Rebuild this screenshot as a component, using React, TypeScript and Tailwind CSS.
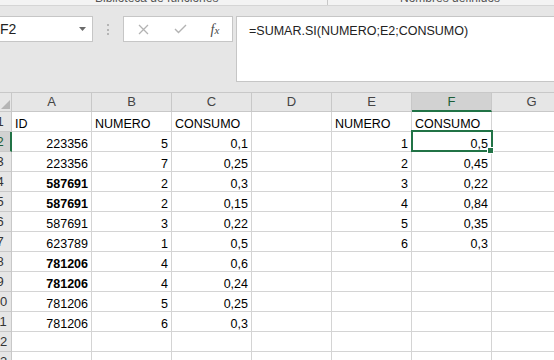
import React from "react";

type Cell = { v: string; align?: "l" | "r"; bold?: boolean };

const FONT = { fontFamily: '"Liberation Sans", Arial, sans-serif' };

const COLS = ["A", "B", "C", "D", "E", "F", "G"];

const L = (v: string): Cell => ({ v, align: "l" });
const R = (v: string, bold = false): Cell => ({ v, align: "r", bold });
const E: Cell = { v: "" };

const ROWS: Cell[][] = [
  [L("ID"), L("NUMERO"), L("CONSUMO"), E, L("NUMERO"), L("CONSUMO"), E],
  [R("223356"), R("5"), R("0,1"), E, R("1"), R("0,5"), E],
  [R("223356"), R("7"), R("0,25"), E, R("2"), R("0,45"), E],
  [R("587691", true), R("2"), R("0,3"), E, R("3"), R("0,22"), E],
  [R("587691", true), R("2"), R("0,15"), E, R("4"), R("0,84"), E],
  [R("587691"), R("3"), R("0,22"), E, R("5"), R("0,35"), E],
  [R("623789"), R("1"), R("0,5"), E, R("6"), R("0,3"), E],
  [R("781206", true), R("4"), R("0,6"), E, E, E, E],
  [R("781206", true), R("4"), R("0,24"), E, E, E, E],
  [R("781206"), R("5"), R("0,25"), E, E, E, E],
  [R("781206"), R("6"), R("0,3"), E, E, E, E],
  [E, E, E, E, E, E, E],
  [E, E, E, E, E, E, E],
];

function FormulaBar() {
  return (
    <div className="flex h-[86px] items-start bg-[#e6e6e6] pt-[10px]">
      <div className="relative flex h-[26px] w-[93px] items-center border border-l-0 border-[#c6c6c6] bg-white text-[14px] text-[#222]">
        <span>F2</span>
        <svg className="absolute left-[79px] top-[10px]" width="7" height="4" viewBox="0 0 7 4">
          <path d="M0 0 L7 0 L3.5 4 Z" fill="#6a6a6a" />
        </svg>
      </div>
      <div className="flex w-[30px] flex-col items-center gap-[2.5px] pt-[8px]">
        <span className="h-[2px] w-[2px] bg-[#b5b5b5]" />
        <span className="h-[2px] w-[2px] bg-[#b5b5b5]" />
        <span className="h-[2px] w-[2px] bg-[#b5b5b5]" />
      </div>
      <div className="flex h-[26px] w-[110px] items-center border border-[#c6c6c6] bg-white">
        <div className="flex w-[38px] justify-center pl-[1px]">
          <svg width="11" height="11" viewBox="0 0 11 11">
            <path d="M1 1 L10 10 M10 1 L1 10" stroke="#b3b3b3" strokeWidth="1.3" />
          </svg>
        </div>
        <div className="flex w-[36px] justify-center">
          <svg width="13" height="10" viewBox="0 0 13 10">
            <path d="M1 5 L4.5 8.5 L12 1" stroke="#b3b3b3" strokeWidth="1.4" fill="none" />
          </svg>
        </div>
        <div
          className="flex w-[34px] justify-center text-[14px] italic text-[#4a4a4a]"
          style={{ fontFamily: '"Liberation Serif", "Times New Roman", serif' }}
        >
          <span>f</span>
          <span className="mt-[3px] text-[11px]">x</span>
        </div>
      </div>
      <div className="ml-[3px] h-[66px] flex-1 border border-r-0 border-[#c6c6c6] bg-white pl-[12px] pt-[5px] text-[12.5px] text-[#222]">
        =SUMAR.SI(NUMERO;E2;CONSUMO)
      </div>
    </div>
  );
}

function Grid() {
  return (
    <div className="grid grid-cols-[12px_repeat(7,80px)] bg-white text-[12.5px] text-black">
      <div className="relative h-[20px] border-r border-b border-t border-[#c8c8c8] bg-[#e6e6e6]">
        <svg className="absolute bottom-[2px] right-[1px]" width="9" height="9" viewBox="0 0 9 9">
          <path d="M9 0 L9 9 L0 9 Z" fill="#b5b5b5" />
        </svg>
      </div>
      {COLS.map((c) => (
        <div
          key={c}
          className={
            c === "F"
              ? "flex h-[20px] items-center justify-center border-r border-t border-b-2 border-r-[#c8c8c8] border-t-[#c8c8c8] border-b-[#217346] bg-[#d2d2d2] text-[13px] text-[#1d5e38]"
              : "flex h-[20px] items-center justify-center border-r border-b border-t border-[#c8c8c8] bg-[#e6e6e6] text-[13px] text-[#444]"
          }
        >
          {c}
        </div>
      ))}
      {ROWS.map((row, ri) => (
        <React.Fragment key={ri}>
          <div
            className={
              ri === 1
                ? "flex h-[20px] overflow-hidden border-b border-r-2 border-b-[#c8c8c8] border-r-[#217346] bg-[#d2d2d2] text-[13px] text-[#1d5e38]"
                : "flex h-[20px] overflow-hidden border-b border-r border-[#c8c8c8] bg-[#e6e6e6] text-[13px] text-[#333]"
            }
          >
            <div className="ml-[-12px] flex w-[24px] shrink-0 items-center justify-center">{ri + 1}</div>
          </div>
          {row.map((cell, ci) => (
            <div
              key={ci}
              className={
                "relative flex h-[20px] items-end border-r border-b border-[#d4d4d4] px-[3px] pb-[1px] leading-none " +
                (cell.align === "r" ? "justify-end " : "justify-start ") +
                (cell.bold ? "font-bold" : "")
              }
            >
              {cell.v}
              {ri === 1 && ci === 5 && (
                <>
                  <div className="absolute left-[-1px] top-[-2px] z-10 h-[22px] w-[82px] border-2 border-[#217346]" />
                  <div className="absolute bottom-[-3px] right-[-3px] z-20 h-[7px] w-[7px] border border-white bg-[#217346]" />
                </>
              )}
            </div>
          ))}
        </React.Fragment>
      ))}
    </div>
  );
}

export default function App() {
  return (
    <div className="h-[360px] w-[554px] overflow-hidden bg-white" style={FONT}>
      <div className="relative h-[6px] overflow-hidden border-b border-[#d5d5d5] bg-[#f3f3f3] text-[12px] text-[#555]">
        <span className="absolute left-[95px] top-[-11px]">Biblioteca de funciones</span>
        <span className="absolute left-[327px] top-0 h-[5px] w-px bg-[#c8c8c8]" />
        <span className="absolute left-[400px] top-[-11px]">Nombres definidos</span>
      </div>
      <FormulaBar />
      <Grid />
    </div>
  );
}
